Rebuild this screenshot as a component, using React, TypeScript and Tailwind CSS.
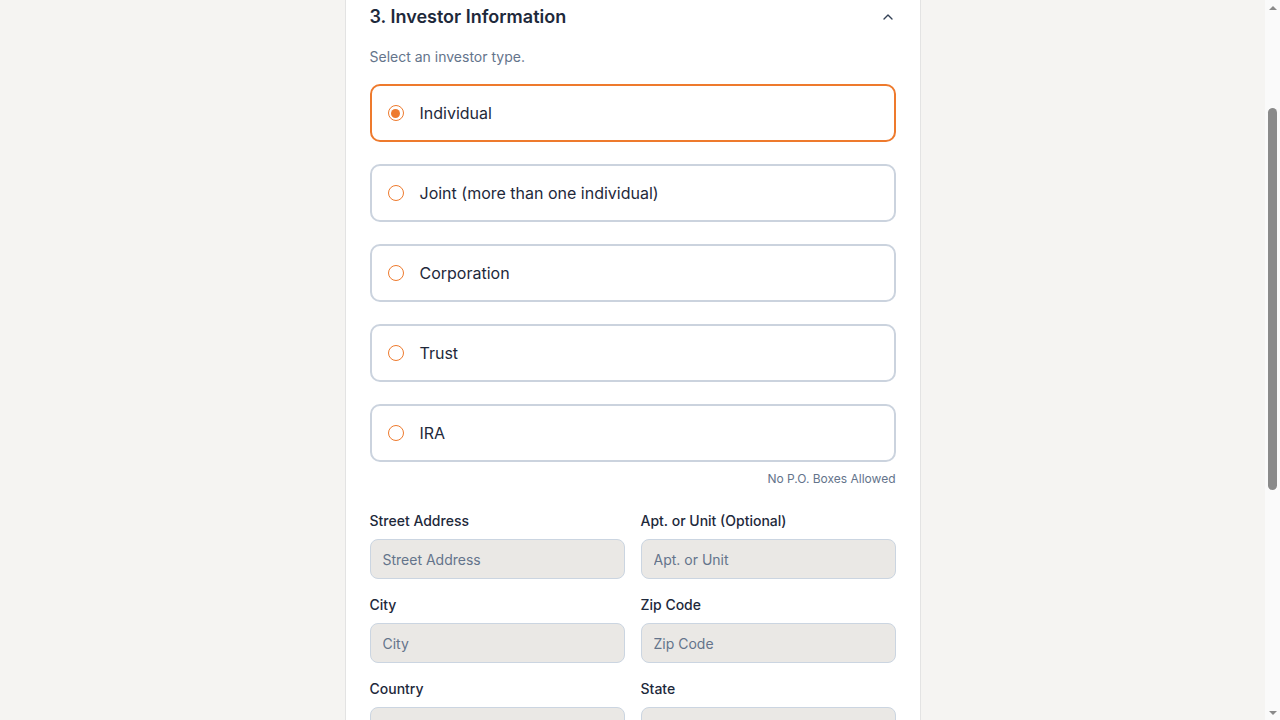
import React, { useLayoutEffect, useRef, useState } from "react";
import { ChevronUp, ChevronDown } from "lucide-react";

const investorTypes = ["Individual", "Joint (more than one individual)", "Corporation", "Trust", "IRA"];

const Field = ({ label, placeholder }: { label: string; placeholder: string }) => (
  <div className="flex flex-col">
    <label className="text-sm leading-5 font-medium text-[#1e293b]">{label}</label>
    <input
      placeholder={placeholder}
      className="mt-2 h-10 w-full rounded-lg border border-[#cbd5e1] bg-[#eae8e5] px-3 text-sm text-[#1e293b] placeholder:text-[#64748b] outline-none"
    />
  </div>
);

const CollapsedSection = ({ title }: { title: string }) => (
  <div className="h-[64px] px-6 flex items-center justify-between border-b border-[#e5e7eb]">
    <h2 className="text-lg font-semibold text-[#1e293b]">{title}</h2>
    <ChevronDown size={16} strokeWidth={2} className="text-[#334155]" />
  </div>
);

const App = () => {
  const [selected, setSelected] = useState("Individual");
  const scrollRef = useRef<HTMLDivElement>(null);
  const headingRef = useRef<HTMLDivElement>(null);

  useLayoutEffect(() => {
    const box = scrollRef.current;
    const h = headingRef.current;
    if (box && h) {
      const off = h.getBoundingClientRect().top - box.getBoundingClientRect().top + box.scrollTop;
      box.scrollTop = off - 3;
    }
  }, []);

  return (
    <div className="flex h-screen w-full font-['Inter','Liberation_Sans',sans-serif]">
      <div ref={scrollRef} className="flex-1 h-screen overflow-hidden bg-[#f5f4f2]">
        <div className="pt-6 pb-24">
          <div className="mx-auto w-[576px] bg-white border border-[#e3e3e3]">
            <CollapsedSection title="1. Investment Amount" />
            <CollapsedSection title="2. Contact Information" />

            {/* investor info */}
            <div className="px-6 pt-5 pb-6 border-b border-[#e5e7eb]">
              <div ref={headingRef} className="flex items-center justify-between h-7">
                <h2 className="text-lg leading-7 font-semibold text-[#1e293b]">3. Investor Information</h2>
                <ChevronUp size={16} strokeWidth={2} className="text-[#334155]" />
              </div>

              <p className="mt-4 text-sm leading-5 text-[#64748b]">Select an investor type.</p>

              <div className="mt-[17px] flex flex-col gap-[22px]">
                {investorTypes.map((t) => {
                  const on = selected === t;
                  return (
                    <button
                      key={t}
                      onClick={() => setSelected(t)}
                      className={
                        on
                          ? "h-[58px] w-full rounded-[10px] border-2 border-[#ee7a2d] bg-white px-4 flex items-center gap-4 text-left"
                          : "h-[58px] w-full rounded-[10px] border-2 border-[#cbd3de] bg-white px-4 flex items-center gap-4 text-left"
                      }
                    >
                      <span className="w-4 h-4 rounded-full border-[1.5px] border-[#ee7a2d] flex items-center justify-center shrink-0">
                        {on && <span className="w-[9px] h-[9px] rounded-full bg-[#ee7a2d]" />}
                      </span>
                      <span className="text-base text-[#1e293b]">{t}</span>
                    </button>
                  );
                })}
              </div>

              <p className="mt-[9px] text-xs leading-4 text-right text-[#64748b]">No P.O. Boxes Allowed</p>

              <div className="mt-6 grid grid-cols-2 gap-x-4 gap-y-4">
                <Field label="Street Address" placeholder="Street Address" />
                <Field label="Apt. or Unit (Optional)" placeholder="Apt. or Unit" />
                <Field label="City" placeholder="City" />
                <Field label="Zip Code" placeholder="Zip Code" />
                <Field label="Country" placeholder="Select Country" />
                <Field label="State" placeholder="Select State" />
                <Field label="Phone Number" placeholder="Phone Number" />
                <Field label="Date of Birth" placeholder="MM/DD/YYYY" />
              </div>

              <button className="mt-8 h-12 w-full rounded-lg bg-[#ee7a2d] text-white text-base font-semibold">
                Continue
              </button>
            </div>

            <CollapsedSection title="4. Review & Sign" />
          </div>
        </div>
      </div>

      {/* scrollbar */}
      <div className="w-[15px] h-screen bg-[#fafafa] flex flex-col items-center shrink-0">
        <div className="h-[15px] flex items-center justify-center">
          <span className="w-0 h-0 border-x-[4px] border-x-transparent border-b-[4px] border-b-[#8a8a8a]" />
        </div>
        <div className="mt-[93px] h-[382px] w-[9px] rounded-full bg-[#8a8a8a]" />
        <div className="flex-1" />
        <div className="h-[15px] flex items-center justify-center">
          <span className="w-0 h-0 border-x-[4px] border-x-transparent border-t-[4px] border-t-[#8a8a8a]" />
        </div>
      </div>
    </div>
  );
};

export default App;
